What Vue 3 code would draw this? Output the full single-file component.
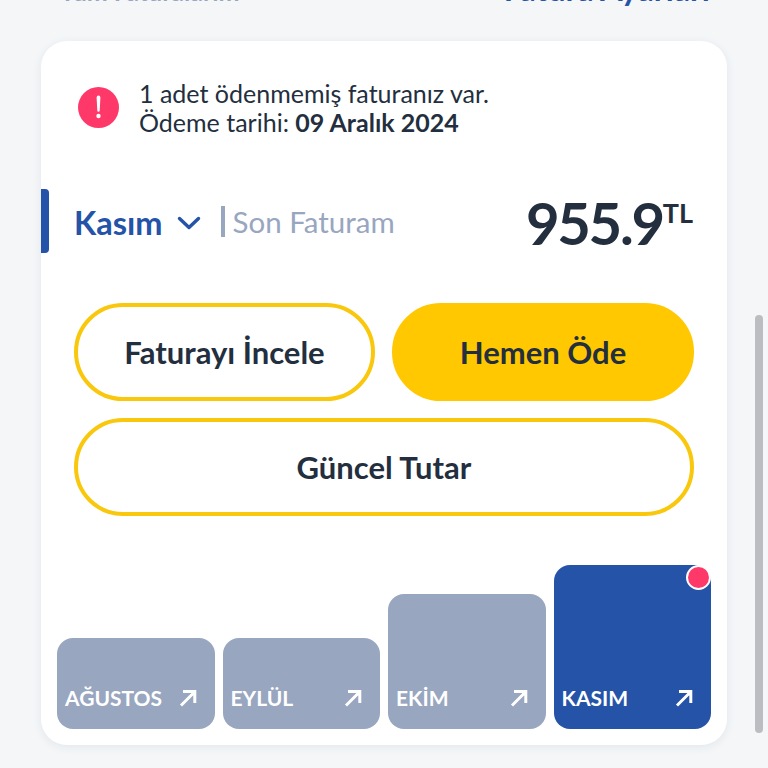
<script setup>
const bars = [
  { label: 'AĞUSTOS', height: 91, active: false },
  { label: 'EYLÜL', height: 91, active: false },
  { label: 'EKİM', height: 135, active: false },
  { label: 'KASIM', height: 164, active: true },
]
</script>

<template>
  <div class="page">
    <div class="top">
      <span class="top-left">Tüm Faturalarım</span>
      <span class="top-right">Fatura Ayarları</span>
    </div>
    <section class="card">
      <div class="notice">
        <svg class="alert" width="41" height="41" viewBox="0 0 41 41">
          <circle cx="20.5" cy="20.5" r="20.5" fill="#ff386a" />
          <path d="M18.6 10.5 a1.9 1.9 0 0 1 3.8 0 L21.7 23.5 a1.2 1.2 0 0 1 -2.4 0 Z" fill="#fff" />
          <circle cx="20.5" cy="29" r="2.2" fill="#fff" />
        </svg>
        <p class="notice-text">
          1 adet ödenmemiş faturanız var.<br />
          Ödeme tarihi: <b>09 Aralık 2024</b>
        </p>
      </div>
      <div class="summary">
        <span class="marker"></span>
        <span class="month">Kasım</span>
        <svg class="chev" width="24" height="14" viewBox="0 0 24 14">
          <path d="M2.5 2.5 L12 11.5 L21.5 2.5" fill="none" stroke="#2453a8" stroke-width="3.4" stroke-linecap="round" stroke-linejoin="round" />
        </svg>
        <span class="last">Son Faturam</span>
        <span class="amount">955.9<sup>TL</sup></span>
      </div>
      <div class="actions">
        <button class="btn">Faturayı İncele</button>
        <button class="btn solid">Hemen Öde</button>
        <button class="btn wide">Güncel Tutar</button>
      </div>
      <div class="bars">
        <div
          v-for="bar in bars"
          :key="bar.label"
          class="bar"
          :class="{ active: bar.active }"
          :style="{ height: bar.height + 'px' }"
        >
          <span v-if="bar.active" class="dot"></span>
          <span class="bar-label">{{ bar.label }}</span>
          <svg width="18" height="18" viewBox="0 0 18 18">
            <path d="M2 16.5 L15.5 3 M4 2.5 H15.8 V14" fill="none" stroke="#fff" stroke-width="3" />
          </svg>
        </div>
      </div>
    </section>
    <div class="scrollbar"></div>
  </div>
</template>

<style scoped>
.page {
  position: relative;
  width: 768px;
  height: 768px;
  overflow: hidden;
  background: #f4f6f8;
  font-family: Lato, "Noto Sans", sans-serif;
  color: #232f3e;
}
.top {
  display: flex;
  justify-content: space-between;
  align-items: baseline;
  height: 64px;
  padding: 0 58px 0 60px;
  box-sizing: border-box;
  margin-top: -23px;
  font-weight: 700;
  line-height: 24px;
}
.top-left { color: #98a6bf; font-size: 25px; }
.top-right { color: #2453a8; font-size: 32px; }
.card {
  width: 686px;
  height: 704px;
  margin-left: 41px;
  box-sizing: border-box;
  padding-top: 37px;
  background: #fff;
  border-radius: 26px;
  box-shadow: 0 2px 10px rgba(40, 60, 90, 0.08);
}
.notice {
  display: flex;
  align-items: center;
  gap: 20px;
  padding-left: 37px;
}
.notice-text {
  margin: 1px 0 0;
  font-size: 25px;
  line-height: 29px;
}
.notice-text b { font-weight: 700; }
.summary {
  display: flex;
  align-items: center;
  position: relative;
  box-sizing: border-box;
  height: 64px;
  margin-top: 52px;
  padding: 3px 34px 0 33px;
}
.marker {
  position: absolute;
  left: 0;
  top: 0;
  width: 8px;
  height: 64px;
  background: #2453a8;
  border-radius: 0 4px 4px 0;
}
.month {
  font-size: 32.5px;
  font-weight: 700;
  color: #2453a8;
}
.chev { margin-left: 14px; }
.last {
  margin: -3px 0 0 20px;
  padding-left: 8px;
  border-left: 4px solid #98a6bf;
  font-size: 29.5px;
  line-height: 31px;
  color: #98a6bf;
}
.amount {
  margin-left: auto;
  font-size: 58px;
  font-weight: 700;
  letter-spacing: -2.3px;
  line-height: 64px;
}
.amount sup {
  font-size: 27px;
  letter-spacing: 0;
  vertical-align: 22px;
  line-height: 0;
}
.actions {
  display: grid;
  grid-template-columns: 301px 1fr;
  gap: 17px;
  margin-top: 50px;
  padding: 0 33px;
}
.btn {
  height: 98px;
  border: 4px solid #f9c70c;
  border-radius: 49px;
  background: #fff;
  color: #232f3e;
  font: 700 31px Lato, sans-serif;
}
.btn.solid { background: #ffc800; border-color: #ffc800; }
.btn.wide { grid-column: 1 / 3; }
.bars {
  display: flex;
  align-items: flex-end;
  gap: 8px;
  height: 164px;
  margin-top: 49px;
  padding: 0 16px;
}
.bar {
  position: relative;
  flex: 1;
  display: flex;
  align-items: flex-end;
  justify-content: space-between;
  box-sizing: border-box;
  padding: 0 18px 22px 8px;
  background: #98a6bf;
  border-radius: 16px;
  color: #fff;
}
.bar.active { background: #2453a8; }
.bar-label {
  font-size: 21px;
  font-weight: 700;
  line-height: 18px;
}
.dot {
  position: absolute;
  top: 0;
  right: 0;
  width: 25px;
  height: 25px;
  box-sizing: border-box;
  border: 2px solid #fff;
  border-radius: 50%;
  background: #ff386a;
}
.scrollbar {
  position: absolute;
  left: 755px;
  top: 315px;
  width: 8px;
  height: 418px;
  border-radius: 4px;
  background: #bbbdc0;
}
</style>
